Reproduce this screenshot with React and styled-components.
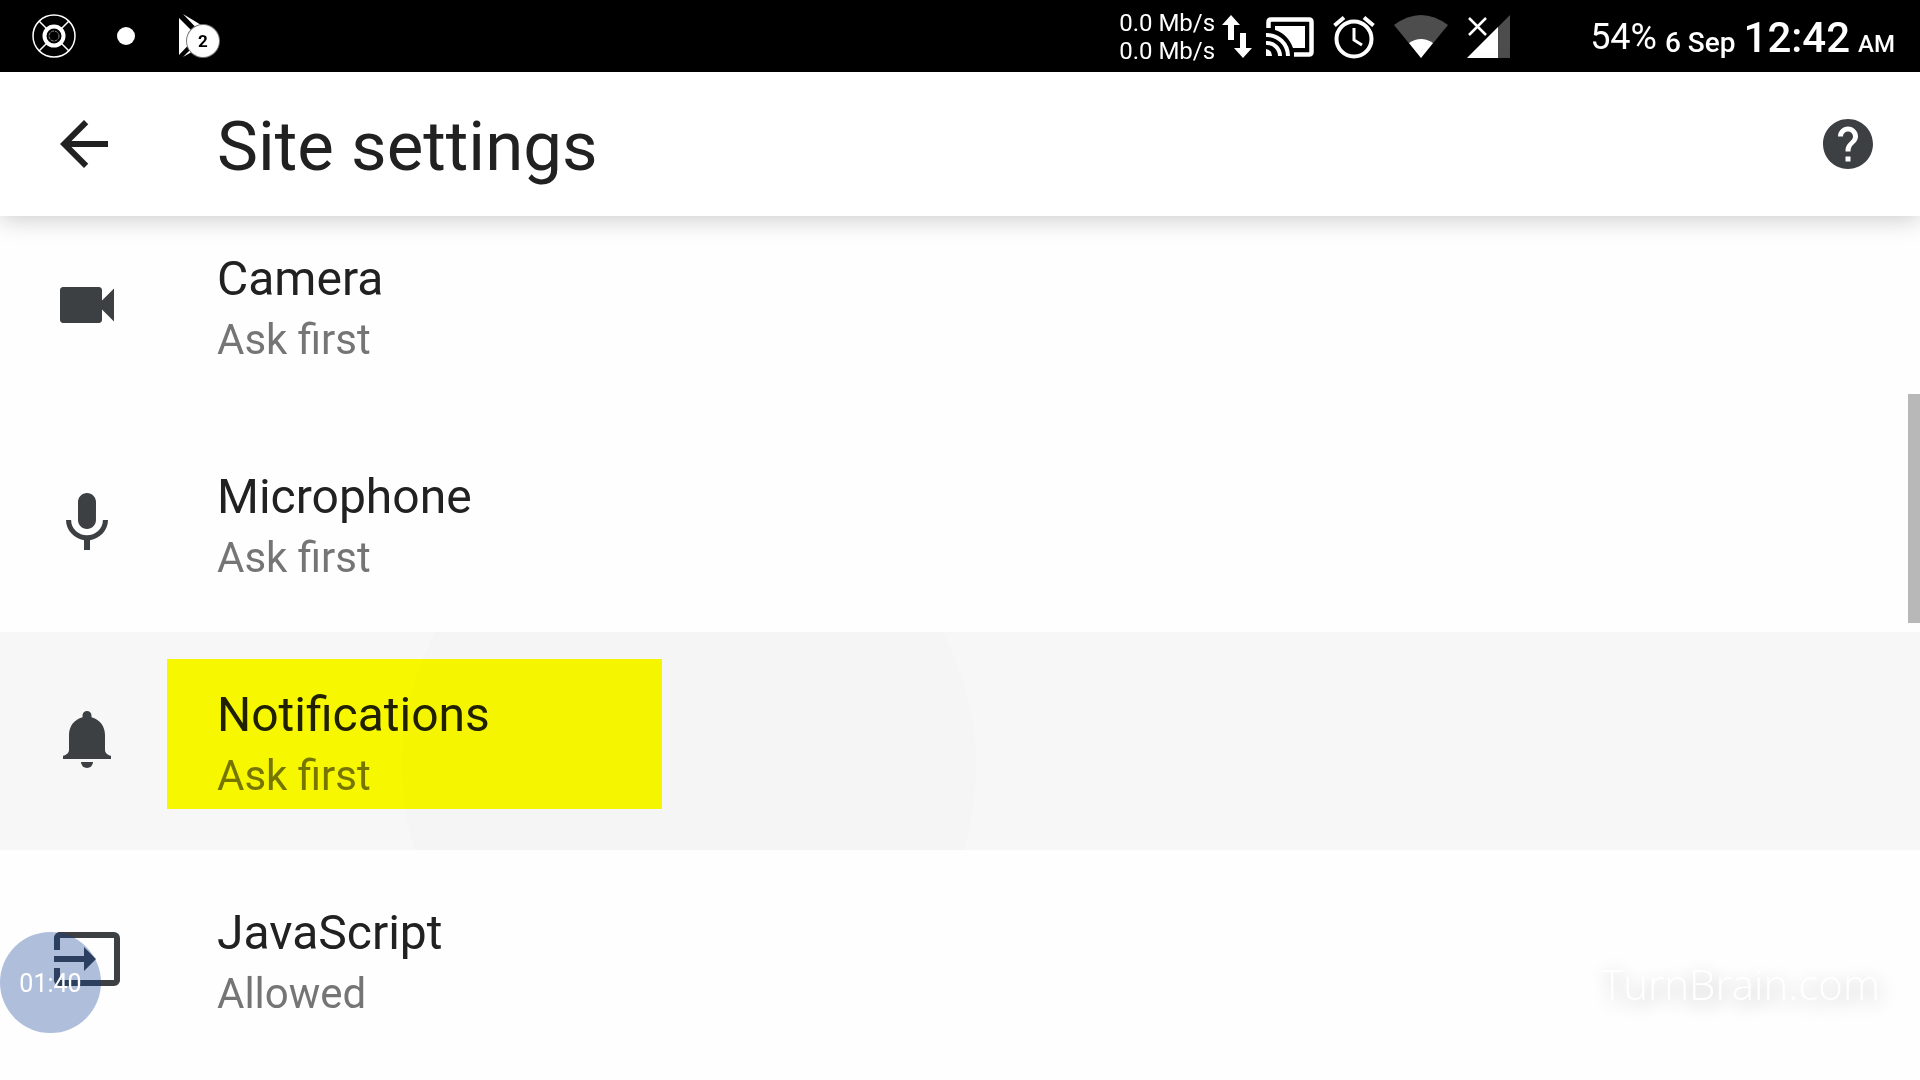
import styled, { createGlobalStyle } from "styled-components";
import { MdArrowBack, MdHelp, MdVideocam, MdMic, MdInput } from "react-icons/md";

const BellIcon = () => (
    <svg viewBox="0 0 24 24" fill="currentColor">
        <path d="M10.5 3.5a1.5 1.5 0 0 1 3 0v.6C16.2 4.8 18 7 18 10v5c0 .9.8 1.7 2 1.9V18H4v-1.1c1.2-.2 2-1 2-1.9v-5c0-3 1.8-5.2 4.5-5.9z" />
        <path d="M10 19h4a2 2 0 0 1-4 0z" />
    </svg>
)

const RecorderIcon = () => (
    <svg width="44" height="44" viewBox="0 0 44 44" fill="none" stroke="#fff">
        <circle cx="22" cy="22" r="21" strokeWidth="1.5" />
        <circle cx="22" cy="22" r="9.5" strokeWidth="4" />
        <circle cx="22" cy="22" r="5" strokeWidth="1" stroke="#888" strokeDasharray="3 1" />
        <path d="M7 7l8 8M37 7l-8 8M7 37l8-8M37 37l-8-8" strokeWidth="1.5" />
    </svg>
)

const PlayIcon = () => (
    <svg width="46" height="44" viewBox="-3 0 46 44">
        <path d="M0 4l18 18L0 41z" fill="#fff" />
        <path d="M4 0l28 17-8 4zM4 43l20-20 8 4z" fill="#fff" />
        <circle cx="24" cy="27" r="17" fill="#777" />
        <circle cx="24" cy="27" r="16" fill="#fff" />
        <text x="24" y="33" textAnchor="middle" fontFamily="Roboto, sans-serif" fontSize="17" fontWeight="700">2</text>
    </svg>
)

const TransferIcon = () => (
    <svg width="30" height="44" viewBox="0 0 30 44" fill="#fff">
        <path d="M9 0l9 10h-6v15H6V10H0z" />
        <path d="M21 43l9-10h-6V18h-6v15h-6z" />
    </svg>
)

const CastIcon = () => (
    <svg width="48" height="40" viewBox="0 0 48 40" fill="none" stroke="#fff">
        <path d="M2.5 11V5q0-2.500 2.500-2.500h38q2.500 0 2.500 2.500v30q0 2.500-2.500 2.500H28" strokeWidth="4.5" />
        <path d="M9 9h30v22H27C24 22 17 15 9 13z" fill="#fff" stroke="none" />
        <path d="M0 18a21 21 0 0 1 22 21M0 26a13 13 0 0 1 14 13" strokeWidth="4" />
        <path d="M0 32a7 7 0 0 1 6 7H0z" fill="#fff" stroke="none" />
    </svg>
)

const AlarmIcon = () => (
    <svg width="42" height="44" viewBox="0 0 42 44" fill="none" stroke="#fff">
        <circle cx="21" cy="24" r="17.5" strokeWidth="4" />
        <path d="M21 13v12l8 5" strokeWidth="3" />
        <path d="M1.5 10.5L11 2.500M40.500 10.500L31 2.500" strokeWidth="4" />
    </svg>
)

const WifiIcon = () => (
    <svg width="54" height="44" viewBox="0 0 54 44">
        <path d="M0 10Q27-10 54 10L27 43z" fill="#4d4d4d" />
        <path d="M15 28q12-8 24 0L27 43z" fill="#fff" />
    </svg>
)

const SignalIcon = () => (
    <svg width="43" height="44" viewBox="0 0 43 44">
        <path d="M43 0v43H0z" fill="#4d4d4d" />
        <path d="M31 12v31H0z" fill="#fff" />
        <path d="M2 3l17 17M19 3L2 20" stroke="#000" strokeWidth="6" />
        <path d="M2 3l17 17M19 3L2 20" stroke="#fff" strokeWidth="2.5" />
    </svg>
)

const settings = [
    { title: "Camera", value: "Ask first", Icon: MdVideocam },
    { title: "Microphone", value: "Ask first", Icon: MdMic },
    { title: "Notifications", value: "Ask first", Icon: BellIcon, active: true },
    { title: "JavaScript", value: "Allowed", Icon: MdInput },
]

const App = () => {
    return (
        <Page>
            <GlobalStyle />
            <StatusBar>
                <StatusLeft>
                    <RecorderIcon />
                    <Dot />
                    <PlayIcon />
                </StatusLeft>
                <StatusRight>
                    <Speed>
                        <span>0.0 Mb/s</span>
                        <span>0.0 Mb/s</span>
                    </Speed>
                    <TransferIcon />
                    <StatusIcons>
                        <CastIcon />
                        <AlarmIcon />
                        <WifiIcon />
                        <SignalIcon />
                    </StatusIcons>
                    <Battery>54%</Battery>
                    <Clock>
                        <DateText>6 Sep</DateText>
                        <Time>12:42</Time>
                        <Period>AM</Period>
                    </Clock>
                </StatusRight>
            </StatusBar>

            <AppBar>
                <IconButton aria-label="Back" $color="#212121"><MdArrowBack /></IconButton>
                <Title>Site settings</Title>
                <IconButton aria-label="Help" $size={60}><MdHelp /></IconButton>
            </AppBar>

            <List>
                {settings.map(({ title, value, Icon, active }) => (
                    <li key={title}>
                        <Row $active={active}>
                            {active && <Ripple />}
                            <RowIcon><Icon /></RowIcon>
                            <RowText>
                                <RowTitle>{title}</RowTitle>
                                <RowValue>{value}</RowValue>
                            </RowText>
                            {active && <Highlight />}
                        </Row>
                    </li>
                ))}
            </List>

            <ScrollThumb />
            <RecordTime>01:40</RecordTime>
            <Watermark>TurnBrain.com</Watermark>
        </Page>
    )
}

const GlobalStyle = createGlobalStyle`
* {
    box-sizing: border-box;
}
body {
    margin: 0;
    background: #fefefe;
    font-family: Roboto, "Liberation Sans", sans-serif;
}
svg {
    display: block;
    flex-shrink: 0;
}
button {
    border: 0;
    padding: 0;
    background: none;
    font: inherit;
    text-align: left;
    cursor: pointer;
}
`

const Page = styled.div`
position: relative;
min-height: 100vh;
overflow: hidden;
`
const StatusBar = styled.div`
height: 72px;
padding: 0 25px 0 32px;
display: flex;
justify-content: space-between;
align-items: center;
background: #000;
color: #fff;
`
const StatusLeft = styled.div`
display: flex;
align-items: center;
gap: 41px;
`
const Dot = styled.span`
width: 18px;
height: 18px;
border-radius: 50%;
background: #fff;
`
const StatusRight = styled.div`
padding-top: 2px;
display: flex;
align-items: center;
`
const Speed = styled.div`
display: flex;
flex-direction: column;
margin-right: 7px;
font-size: 24px;
line-height: 28px;
`
const StatusIcons = styled.div`
display: flex;
align-items: center;
gap: 19px;
margin: 0 80px 0 14px;
`
const Battery = styled.span`
margin-right: 8px;
font-size: 36px;
`
const Clock = styled.div`
display: flex;
align-items: baseline;
gap: 8px;
font-weight: 500;
`
const DateText = styled.span`
font-size: 28px;
`
const Time = styled.span`
font-size: 42px;
`
const Period = styled.span`
font-size: 24px;
`
const AppBar = styled.header`
position: relative;
z-index: 1;
height: 144px;
padding: 0 42px 0 48px;
display: flex;
align-items: center;
background: #fff;
box-shadow: 0 2px 24px rgba(0, 0, 0, 0.22);
`
const IconButton = styled.button`
color: ${props => props.$color || "#3c4043"};

svg {
    width: ${props => props.$size || 72}px;
    height: ${props => props.$size || 72}px;
}
`
const Title = styled.h1`
flex: 1;
margin: 0;
padding: 6px 0 0 97px;
color: #212121;
font-size: 69px;
font-weight: 400;
line-height: 80px;
`
const List = styled.ul`
margin: -20px 0 0;
padding: 0;
list-style: none;
`
const Row = styled.button`
position: relative;
width: 100%;
height: 218px;
padding-left: 51px;
display: flex;
align-items: center;
overflow: hidden;
background: ${props => props.$active ? "#f7f7f7" : "#fefefe"};
`
const RowIcon = styled.span`
position: relative;
color: #3c4043;

svg {
    width: 72px;
    height: 72px;
}
`
const RowText = styled.span`
position: relative;
padding: 10px 0 0 94px;
display: flex;
flex-direction: column;
`
const RowTitle = styled.span`
color: #212121;
font-size: 48px;
line-height: 60px;
`
const RowValue = styled.span`
color: #757575;
font-size: 42px;
line-height: 62px;
`
const Ripple = styled.span`
position: absolute;
left: 402px;
top: -153px;
width: 574px;
height: 574px;
border-radius: 50%;
background: #f5f5f5;
`
const Highlight = styled.span`
position: absolute;
left: 167px;
top: 27px;
width: 495px;
height: 150px;
background: #ff0;
mix-blend-mode: multiply;
`
const ScrollThumb = styled.div`
position: absolute;
z-index: 1;
right: 0;
top: 394px;
width: 12px;
height: 229px;
background: #b8b8b8;
`
const RecordTime = styled.div`
position: absolute;
left: 0;
bottom: 47px;
width: 101px;
height: 101px;
padding-top: 2px;
display: flex;
justify-content: center;
align-items: center;
border-radius: 50%;
background: rgba(13, 60, 150, 0.33);
color: #fff;
font-size: 25px;
`
const Watermark = styled.div`
position: absolute;
right: 40px;
bottom: 68px;
color: #fff;
font-family: "Open Sans", sans-serif;
font-size: 42px;
font-weight: 300;
line-height: 56px;
text-shadow: 2px 5px 18px rgba(0, 0, 0, 0.3);
`

export default App;
